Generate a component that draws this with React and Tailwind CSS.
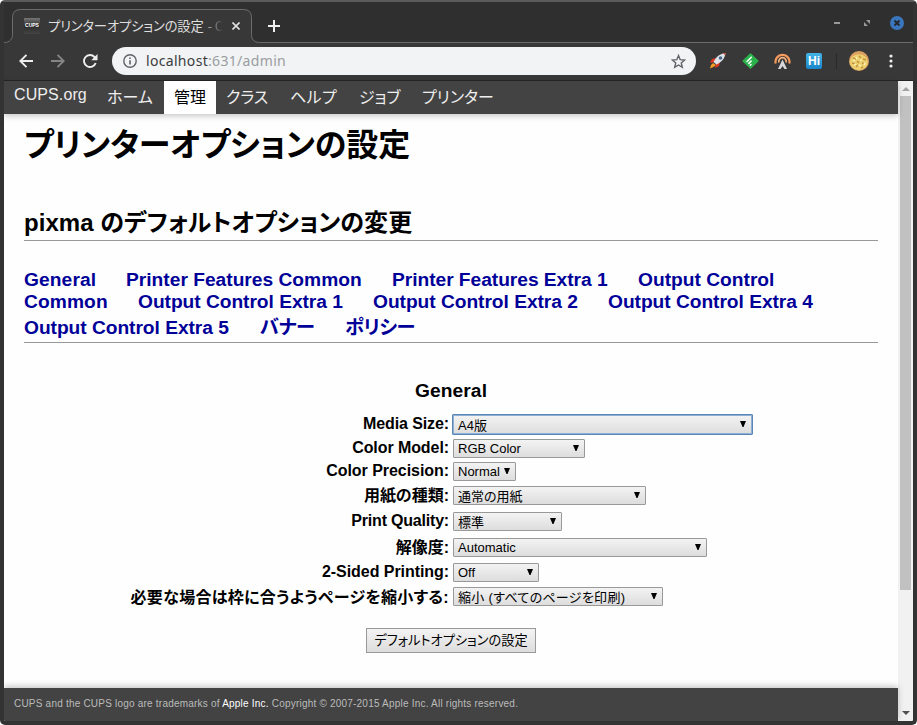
import React from "react";

const SANS = "font-['Liberation_Sans','Noto_Sans_CJK_JP',sans-serif]";
const KANA = "[font-feature-settings:'palt']";

function TitleBar() {
  return (
    <header className="relative h-[41px] shrink-0 bg-[#2f2f2f]">
      <svg className="absolute left-0 top-0" width="909" height="41" viewBox="0 0 909 41" fill="none">
        <path d="M0 41V40.5C6 40.5 8.500 37 8.500 32V15.500Q8.500 7.500 16.500 7.500H239.500Q247.500 7.500 247.500 15.500V32.500Q247.500 40.500 255.500 40.500H909V41Z" fill="#383838" />
        <path d="M0 40.500C6 40.500 8.500 37 8.500 32V15.500Q8.500 7.500 16.500 7.500H239.500Q247.500 7.500 247.500 15.500V32.500Q247.500 40.500 255.500 40.500H909" stroke="#6c6c6c" />
      </svg>
      <div className="relative flex h-full items-center">
        <div className="flex h-[33px] w-[248px] items-center pl-5 pt-[7px]">
          <span className="flex h-4 w-4 shrink-0 items-center justify-center bg-linear-to-b from-[#777] via-[#2c2c2c] to-[#444] font-['Liberation_Sans',sans-serif] text-[5px] font-bold text-white">CUPS</span>
          <span className="ml-2 w-[176px] shrink-0 whitespace-nowrap font-['Noto_Sans_CJK_JP',sans-serif] text-[13.300px] leading-5 text-[#dedede]">
            <span className={`${KANA} tracking-[-0.150px]`}>プリンターオプションの設定 <span className="ml-[1px] text-[#999]">-</span> <span className="bg-linear-to-r from-[#888] to-[#383838] bg-clip-text text-transparent">C</span></span>
          </span>
          <svg className="ml-[8px] shrink-0" width="8" height="8" viewBox="0 0 9 9" stroke="#e0e0e0" strokeWidth="1.800"><path d="M.5 .5l8 8M8.500 .5l-8 8" /></svg>
        </div>
        <svg className="ml-4 mt-[7px]" width="12" height="12" viewBox="0 0 12 12" stroke="#f0f0f0" strokeWidth="2"><path d="M6 0v12M0 6h12" /></svg>
        <div className="ml-auto flex items-center pb-0 pt-[1px] pr-[9px]">
          <span className="h-[2px] w-[6px] bg-[#999]" />
          <svg className="ml-6" width="6" height="6" viewBox="0 0 6 6" fill="#999"><path d="M2 0h4v4zM0 2v4h4z" /></svg>
          <svg className="ml-5" width="14" height="14" viewBox="0 0 14 14"><circle cx="7" cy="7" r="7" fill="#3a76bd" /><path d="M4.500 4.500l5 5M9.500 4.500l-5 5" stroke="#25292e" strokeWidth="2" /></svg>
        </div>
      </div>
    </header>
  );
}

function Toolbar() {
  return (
    <div className="flex h-[38px] shrink-0 items-center border-b border-[#252525] bg-[#383838] pb-[1px]">
      <svg className="ml-[15px]" width="14" height="14" viewBox="0 0 14 14" fill="none" stroke="#eee" strokeWidth="1.900"><path d="M14 7H1.500M7.500 .8L1.300 7l6.200 6.200" /></svg>
      <svg className="ml-[18px]" width="14" height="14" viewBox="0 0 14 14" fill="none" stroke="#858585" strokeWidth="1.900"><path d="M0 7h12.500M6.500 .8L12.700 7l-6.200 6.200" /></svg>
      <svg className="ml-[18px]" width="15" height="14" viewBox="0 0 15 14" fill="none"><path d="M12.700 9A6 6 0 1 1 11.500 3L13 4.500" stroke="#eee" strokeWidth="1.900" /><path d="M14.500 0v6.200H8.300z" fill="#eee" /></svg>
      <div className="ml-[14px] flex h-7 w-[584px] items-center rounded-full bg-[#f1f3f4] pl-[11px] pr-[10px]">
        <svg width="14" height="14" viewBox="0 0 14 14" fill="none"><circle cx="7" cy="7" r="6.200" stroke="#5f6368" strokeWidth="1.400" /><path d="M7 6.200v4.200M7 3.400v1.500" stroke="#5f6368" strokeWidth="1.600" /></svg>
        <span className="ml-[9px] font-['Noto_Sans',sans-serif] text-[14px] leading-5 tracking-[0.320px] text-[#3c3d3f]">localhost<span className="text-[#9a9da1]">:631/admin</span></span>
        <svg className="ml-auto" width="15" height="15" viewBox="0 0 24 24" fill="none" stroke="#5f6368" strokeWidth="2.200"><path d="M12 2.500l2.700 6.600 7.200.6-5.500 4.700 1.700 7L12 17.600l-6.100 3.800 1.700-7L2.100 9.700l7.200-.6z" /></svg>
      </div>
      <svg className="ml-[13px]" width="17" height="16" viewBox="0 0 17 16">
        <path d="M7 5L3 6 1 10l4-1zM11 9l-1 4-4 2 1-4z" fill="#e3371e" />
        <path d="M16.500 0C11 .5 7 4 4.500 9L7.500 11.500C13 9 16 5 16.500 0z" fill="#dfe3ea" />
        <circle cx="11.500" cy="5" r="1.800" fill="#49688c" />
        <path d="M4 10l3 2-2.500 2L1 15.500 2 12z" fill="#f59a23" />
        <path d="M14 0l2.500 0-.3 2.500z" fill="#d8442c" />
      </svg>
      <svg className="ml-[16px]" width="17" height="16" viewBox="0 0 17 16"><path d="M8.500 1.200L15.800 8 8.500 14.800 1.200 8z" fill="#2bb24c" stroke="#2bb24c" strokeWidth="1.600" strokeLinejoin="round" /><path d="M5 8.500l4.300-4.300M6.800 10.400l2.300-2.300M8.300 12.200l.7-.7" stroke="#fff" strokeWidth="1.500" strokeLinecap="round" /></svg>
      <svg className="ml-[15px]" width="17" height="16" viewBox="0 0 17 16" fill="none">
        <path d="M1.700 10.500A7 7 0 1 1 15.300 10.500" stroke="#f39a5c" strokeWidth="2.200" />
        <path d="M5 9.500A3.700 3.700 0 1 1 12 9.500" stroke="#f7b37c" strokeWidth="1.700" />
        <path d="M8.500 6.500l4.500 9.500h-2.500l-2-3-2 3H4z" fill="#d8d8dc" />
      </svg>
      <span className="ml-[15px] flex h-4 w-4 items-center justify-center rounded-[2px] bg-linear-to-b from-[#43b4e6] to-[#1a86cb] font-['Liberation_Sans',sans-serif] text-[12px] font-bold leading-none text-white">Hi</span>
      <span className="ml-[14px] h-4 w-px bg-[#292929]" />
      <svg className="ml-[12px]" width="20" height="20" viewBox="0 0 20 20">
        <circle cx="10" cy="10" r="10" fill="#dca061" /><ellipse cx="9.800" cy="11.200" rx="9" ry="8" fill="#ecd06f" />
        <path d="M4 7l3 1M10 5l2 2M14 8l3 1M3 12l3 1M8 10l2 2M13 12l3 1M7 16l2-2M12 17l2-1" stroke="#c0933c" strokeWidth="1.500" />
        <path d="M7 6l1 2M4 10l2-1M11 9l2 0M10 14l2 1M5 14l2-1M15 14l1-2" stroke="#fbefb0" strokeWidth="1.700" />
      </svg>
      <svg className="ml-[20px]" width="4" height="14" viewBox="0 0 4 14" fill="#eee"><circle cx="2" cy="2" r="1.600" /><circle cx="2" cy="7" r="1.600" /><circle cx="2" cy="12" r="1.600" /></svg>
    </div>
  );
}

function Nav() {
  return (
    <nav className="relative z-10 flex h-[33px] shrink-0 items-center whitespace-nowrap bg-[#434343] pl-[10px] text-[16px] leading-5 text-[#eee] shadow-[0_2px_6px_rgba(0,0,0,0.22)]">
      <span className="w-[93px] pb-[5px] tracking-[0.1px]">CUPS.org</span>
      <span className={`w-[57px] ${KANA}`}>ホーム</span>
      <span className="flex h-full w-[52px] items-center justify-center bg-white text-black">管理</span>
      <span className={`w-[65px] pl-[10px] ${KANA}`}>クラス</span>
      <span className={`w-[69px] pl-[9px] ${KANA} tracking-[0.4px]`}>ヘルプ</span>
      <span className={`w-[63px] pl-[9px] ${KANA}`}>ジョブ</span>
      <span className={`pl-[9px] ${KANA}`}>プリンター</span>
    </nav>
  );
}

function Links() {
  return (
    <div className="h-[77px] whitespace-nowrap border-b border-[#999] text-[19.200px] font-bold leading-[22px] text-[#000099]">
      <div className="flex pt-[3px]">
        <a className="w-[102px] tracking-[0.1px]">General</a><a className="w-[266px]">Printer Features Common</a><a className="w-[246px] tracking-[-0.040px]">Printer Features Extra 1</a><a>Output Control</a>
      </div>
      <div className="flex tracking-[-0.040px]">
        <a className="w-[114px] tracking-[0.1px]">Common</a><a className="w-[235px]">Output Control Extra 1</a><a className="w-[235px]">Output Control Extra 2</a><a>Output Control Extra 4</a>
      </div>
      <div className="flex pt-1 tracking-[-0.040px]">
        <a className="w-[236px]">Output Control Extra 5</a><a className={`w-[85px] ${KANA} tracking-[-0.3px]`}>バナー</a><a className={`${KANA} tracking-[-0.4px]`}>ポリシー</a>
      </div>
    </div>
  );
}

const BORDER = "border-[#999]";
const FOCUS = "border-[#5b87b5] ring-1 ring-inset ring-[#8fb0d4]";

const rows = [
  { label: "Media Size:", value: "A4版", width: "w-[301px] -ml-px h-[21px] pl-[5px] pr-[6px]", gap: "h-[21px]", text: "pt-[3px]", border: FOCUS, labelClass: "tracking-[-0.1px]" },
  { label: "Color Model:", value: "RGB Color", width: "w-[132px] h-[19px] pl-1 pr-[5px]", gap: "mt-1 h-[19px]", labelClass: "tracking-[-0.080px]" },
  { label: "Color Precision:", value: "Normal", width: "w-[63px] h-[19px] pl-1 pr-[5px]", gap: "mt-1 h-[19px]", labelClass: "tracking-[-0.050px]" },
  { label: "用紙の種類:", value: "通常の用紙", width: "w-[193px] h-[19px] pl-1 pr-[5px]", gap: "mt-[5px] h-[19px]", text: "pt-[3px]", labelClass: "pt-[2px]" },
  { label: "Print Quality:", value: "標準", width: "w-[109px] h-[19px] pl-1 pr-[5px]", gap: "mt-[7px] h-[19px]", text: "pt-[3px]", labelClass: "tracking-[-0.2px]" },
  { label: "解像度:", value: "Automatic", width: "w-[254px] h-[19px] pl-1 pr-[5px]", gap: "mt-[7px] h-[19px]", labelClass: "pt-[2px]" },
  { label: "2-Sided Printing:", value: "Off", width: "w-[86px] h-[19px] pl-1 pr-[5px]", gap: "mt-[6px] h-[19px]", labelClass: "tracking-[-0.060px]" },
  { label: "必要な場合は枠に合うようページを縮小する:", value: "縮小 (すべてのページを印刷)", width: "w-[210px] h-[19px] pl-1 pr-[5px]", gap: "mt-[5px] h-[19px]", text: "pt-[3px] tracking-[0.3px]", labelClass: "pt-[3px] tracking-[0.3px]" },
];

function OptionRow({ row }) {
  return (
    <div className={`flex items-center whitespace-nowrap ${row.gap}`}>
      <label className={`w-[425px] pb-[1px] text-right text-[16px] font-bold leading-[18px] ${KANA} ${row.labelClass}`}>{row.label}</label>
      <div className="ml-1">
        <div className={`flex items-center overflow-hidden rounded-[1px] border bg-linear-to-b from-[#f3f3f3] to-[#dddddd] ${row.border || BORDER} ${row.width}`}>
          <span className={`text-[13px] leading-4 ${KANA} ${row.text || ""}`}>{row.value}</span>
          <svg className="mb-[2px] ml-auto shrink-0" width="6" height="6" viewBox="0 0 6 6"><path d="M0 0h6L3.500 6h-1z" /></svg>
        </div>
      </div>
    </div>
  );
}

export default function App() {
  return (
    <div className={`flex h-[725px] w-[917px] flex-col overflow-hidden rounded-[5px] border-4 border-t-2 border-[#333] border-t-[#5a5a5a] bg-[#333] text-black ${SANS}`}>
      <TitleBar />
      <Toolbar />
      <div className="flex h-[640px] shrink-0">
        <div className="flex w-[894px] flex-col bg-[#fefefe]">
          <Nav />
          <main className="flex grow flex-col px-5">
            <h1 className={`mt-[11px] whitespace-nowrap text-[32px] font-bold leading-10 ${KANA} tracking-[-0.050px]`}>プリンターオプションの設定</h1>
            <h2 className={`mt-[42px] h-[34px] whitespace-nowrap border-b border-[#999] text-[24px] font-bold leading-8 ${KANA} tracking-[0.050px]`}>pixma のデフォルトオプションの変更</h2>
            <div className="mt-[25px]"><Links /></div>
            <h3 className="mt-[37px] text-center text-[19.200px] font-bold leading-[22px] tracking-[0.1px]">General</h3>
            <div className="mt-[12px]">{rows.map((row) => <OptionRow key={row.label} row={row} />)}</div>
            <button className={`mt-[22px] h-[25px] w-[170px] self-center whitespace-nowrap border border-[#999] bg-linear-to-b from-[#f3f3f3] to-[#dddddd] text-[13.200px] leading-5 ${KANA}`}>デフォルトオプションの設定</button>
          </main>
          <footer className="relative flex h-[33px] shrink-0 items-center whitespace-nowrap bg-[#434343] pb-[2px] pl-[10px] text-[10px] tracking-[0.210px] text-[#bbb] shadow-[0_-2px_6px_rgba(0,0,0,0.22)]">
            <p>CUPS and the CUPS logo are trademarks of <a className="text-white">Apple Inc.</a> Copyright © 2007-2015 Apple Inc. All rights reserved.</p>
          </footer>
        </div>
        <aside className="flex w-[15px] flex-col items-center bg-[#f1f1f1]">
          <svg className="mt-[6px] shrink-0" width="8" height="4" viewBox="0 0 8 4" fill="#a3a3a3"><path d="M4 0l4 4H0z" /></svg>
          <div className="mt-[5px] h-[494px] w-[11px] shrink-0 bg-[#c1c1c1]" />
          <svg className="mb-[6px] mt-auto shrink-0" width="8" height="4" viewBox="0 0 8 4" fill="#505050"><path d="M4 4l4-4H0z" /></svg>
        </aside>
      </div>
    </div>
  );
}
